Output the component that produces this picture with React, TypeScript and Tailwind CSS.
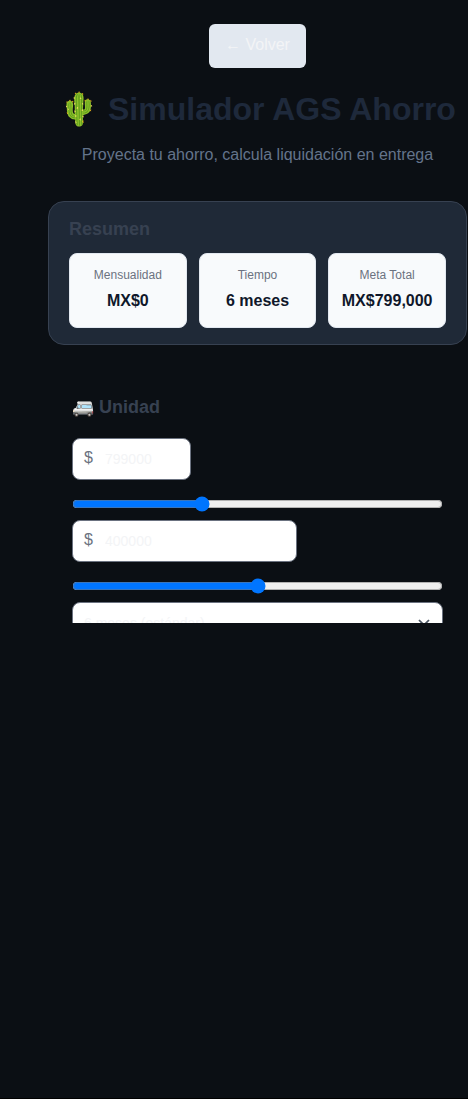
import { useState } from 'react';

const stats = [
  { label: 'Mensualidad', value: 'MX$0' },
  { label: 'Tiempo', value: '6 meses' },
  { label: 'Meta Total', value: 'MX$799,000' },
];

function Amount({ value, onChange, className }: { value: number; onChange: (v: number) => void; className: string }) {
  return (
    <label className={`flex h-[42px] items-center rounded-lg border border-[#6b7280] bg-white pl-[11px] ${className}`}>
      <span className="w-[21px] shrink-0 pb-0.5 text-base leading-6 text-[#6b7280]">$</span>
      <input
        className="w-full min-w-0 bg-transparent text-sm leading-5 text-[#f3f4f6] outline-none"
        value={value}
        onChange={(e) => onChange(Number(e.target.value) || 0)}
      />
    </label>
  );
}

function Range({ value, max, onChange }: { value: number; max: number; onChange: (v: number) => void }) {
  return (
    <input
      type="range"
      min={0}
      max={max}
      step={1000}
      value={value}
      onChange={(e) => onChange(Number(e.target.value))}
      className="mt-4 block h-4 w-full"
    />
  );
}

export default function App() {
  const [price, setPrice] = useState(799000);
  const [down, setDown] = useState(400000);

  return (
    <div className="h-[1099px] w-[468px] overflow-hidden border-b border-black bg-[#0b0f14] font-['Liberation_Sans',Arial,sans-serif]">
      <main className="ml-12 h-[623px] w-[419px] overflow-hidden pt-6">
        <header className="flex flex-col items-center text-center">
          <button className="h-11 w-[97px] rounded-md bg-[#e2e8f0] pb-0.5 text-base text-[#f3f4f6]">← Volver</button>
          <h1 className="mt-[17px] whitespace-nowrap text-[32px] leading-[48px] font-bold text-[#1e293b]">🌵 Simulador AGS Ahorro</h1>
          <p className="mt-[10px] text-base leading-6 text-[#64748b]">Proyecta tu ahorro, calcula liquidación en entrega</p>
        </header>

        <section className="mt-[34px] h-36 rounded-2xl border border-[#374151] bg-[#1f2937] px-5 pt-[14px]">
          <h2 className="text-lg leading-[27px] font-bold text-[#374151]">Resumen</h2>
          <div className="mt-[10px] grid grid-cols-3 gap-3">
            {stats.map((s) => (
              <div key={s.label} className="flex h-[75px] flex-col items-center rounded-lg border border-[#e2e8f0] bg-[#f8fafc] pt-3">
                <span className="text-xs leading-[18px] text-[#6b7280]">{s.label}</span>
                <strong className="mt-[5px] text-base leading-6 font-bold text-[#0f172a]">{s.value}</strong>
              </div>
            ))}
          </div>
        </section>

        <section className="mt-[49px] px-6">
          <h2 className="text-lg leading-[27px] font-bold text-[#374151]">🚐 Unidad</h2>
          <Amount value={price} onChange={setPrice} className="mt-[17px] w-[119px]" />
          <Range value={price} max={2320000} onChange={setPrice} />
          <Amount value={down} onChange={setDown} className="mt-2 w-[225px]" />
          <Range value={down} max={798000} onChange={setDown} />
          <div className="mt-2 flex h-[42px] items-center justify-between rounded-lg border border-[#6b7280] bg-white pr-[12.5px] pl-[11px] text-sm text-[#f3f4f6]">
            <span>6 meses (estándar)</span>
            <svg className="size-3" viewBox="0 0 12 12" fill="none" stroke="#4b5563" strokeWidth="1.75">
              <path d="M1 3l5 5 5-5" />
            </svg>
          </div>
        </section>
      </main>
    </div>
  );
}
